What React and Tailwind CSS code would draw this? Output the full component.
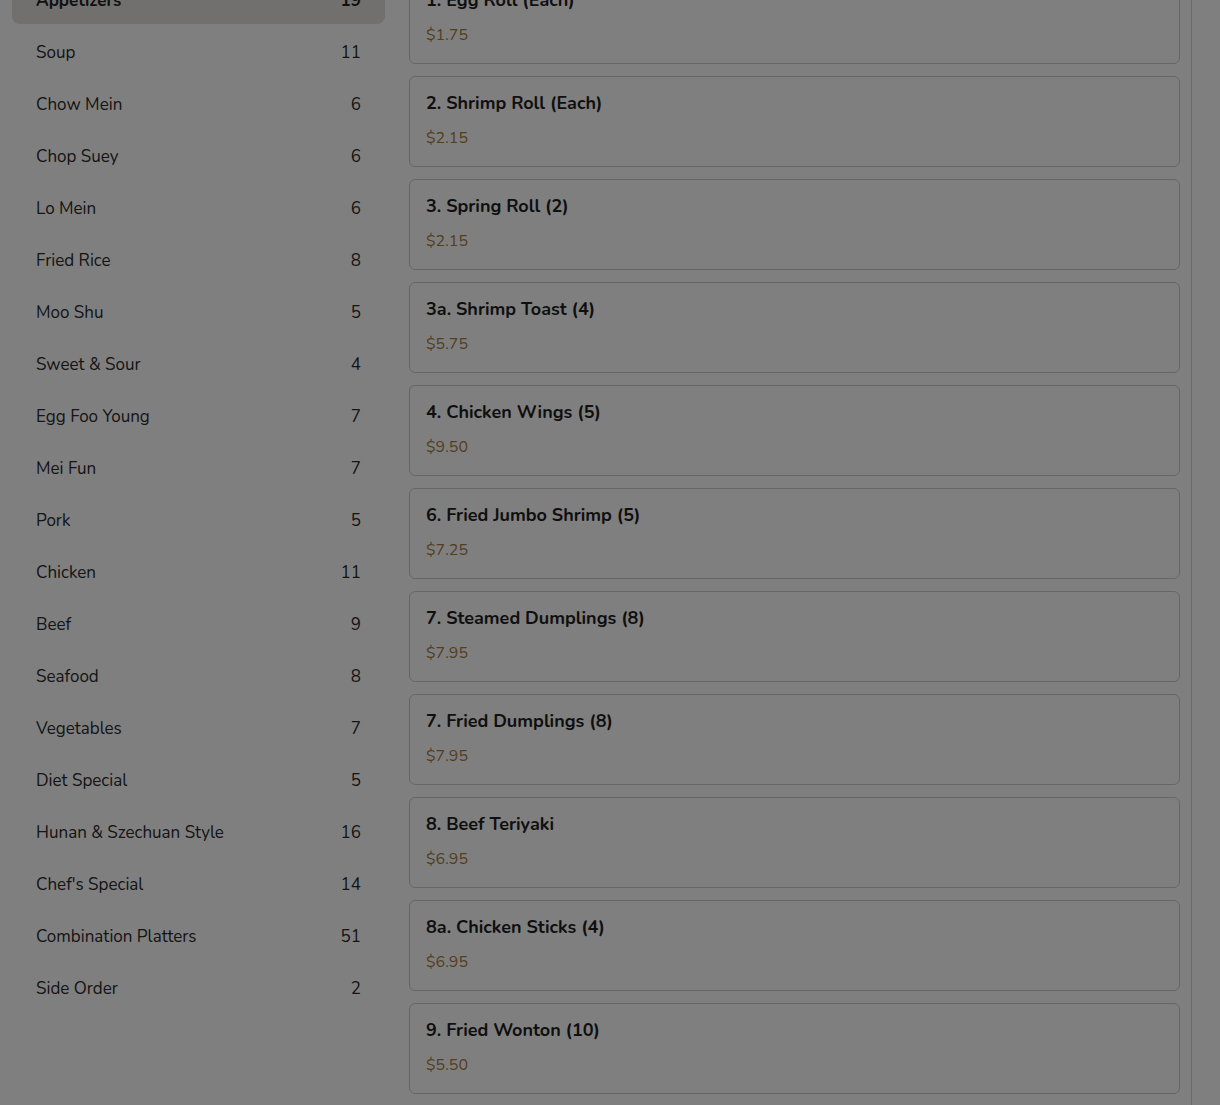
import React from 'react'

const categories = [
  { name: 'Appetizers', count: 19 },
  { name: 'Soup', count: 11 },
  { name: 'Chow Mein', count: 6 },
  { name: 'Chop Suey', count: 6 },
  { name: 'Lo Mein', count: 6 },
  { name: 'Fried Rice', count: 8 },
  { name: 'Moo Shu', count: 5 },
  { name: 'Sweet & Sour', count: 4 },
  { name: 'Egg Foo Young', count: 7 },
  { name: 'Mei Fun', count: 7 },
  { name: 'Pork', count: 5 },
  { name: 'Chicken', count: 11 },
  { name: 'Beef', count: 9 },
  { name: 'Seafood', count: 8 },
  { name: 'Vegetables', count: 7 },
  { name: 'Diet Special', count: 5 },
  { name: 'Hunan & Szechuan Style', count: 16 },
  { name: "Chef's Special", count: 14 },
  { name: 'Combination Platters', count: 51 },
  { name: 'Side Order', count: 2 },
]

const items = [
  { name: '1. Egg Roll (Each)', price: '$1.75' },
  { name: '2. Shrimp Roll (Each)', price: '$2.15' },
  { name: '3. Spring Roll (2)', price: '$2.15' },
  { name: '3a. Shrimp Toast (4)', price: '$5.75' },
  { name: '4. Chicken Wings (5)', price: '$9.50' },
  { name: '6. Fried Jumbo Shrimp (5)', price: '$7.25' },
  { name: '7. Steamed Dumplings (8)', price: '$7.95' },
  { name: '7. Fried Dumplings (8)', price: '$7.95' },
  { name: '8. Beef Teriyaki', price: '$6.95' },
  { name: '8a. Chicken Sticks (4)', price: '$6.95' },
  { name: '9. Fried Wonton (10)', price: '$5.50' },
]

const App = () => {
  return (
    <div
      className="relative h-[1105px] overflow-hidden bg-white"
      style={{ fontFamily: 'Nunito, Lato, "Noto Sans", sans-serif' }}
    >
      <div className="flex -mt-[27px] h-[1160px]">
        {/* category list */}
        <aside className="ml-3 w-[373px] shrink-0 pt-[3px] flex flex-col gap-1">
          {categories.map((c, i) => (
            <div
              key={c.name}
              className={
                i === 0
                  ? 'h-12 px-6 pt-[2px] flex items-center justify-between rounded-lg bg-[#e2e0de] text-[17px] leading-6 font-bold text-[#222]'
                  : 'h-12 px-6 pt-[2px] flex items-center justify-between rounded-lg text-[17px] leading-6 text-[#2a2a2a]'
              }
            >
              <span>{c.name}</span>
              <span>{c.count}</span>
            </div>
          ))}
        </aside>

        {/* menu items */}
        <main className="ml-6 w-[771px] shrink-0 flex flex-col gap-3">
          {items.map((it) => (
            <div
              key={it.name}
              className="h-[91px] rounded-md border border-[#cdcdcd] px-4 pt-[14px] pb-4 flex flex-col gap-[11px]"
            >
              <h3 className="h-6 leading-6 text-[18px] font-bold text-[#1e1e1e]">
                {it.name}
              </h3>
              <p className="h-6 leading-6 text-[16px] text-[#a57c42]">{it.price}</p>
            </div>
          ))}
        </main>

        {/* cart panel edge */}
        <div className="ml-[11px] flex-1 border-l border-[#d6d6d6]" />
      </div>

      {/* modal backdrop */}
      <div className="fixed inset-0 bg-black/50" />
    </div>
  )
}

export default App
